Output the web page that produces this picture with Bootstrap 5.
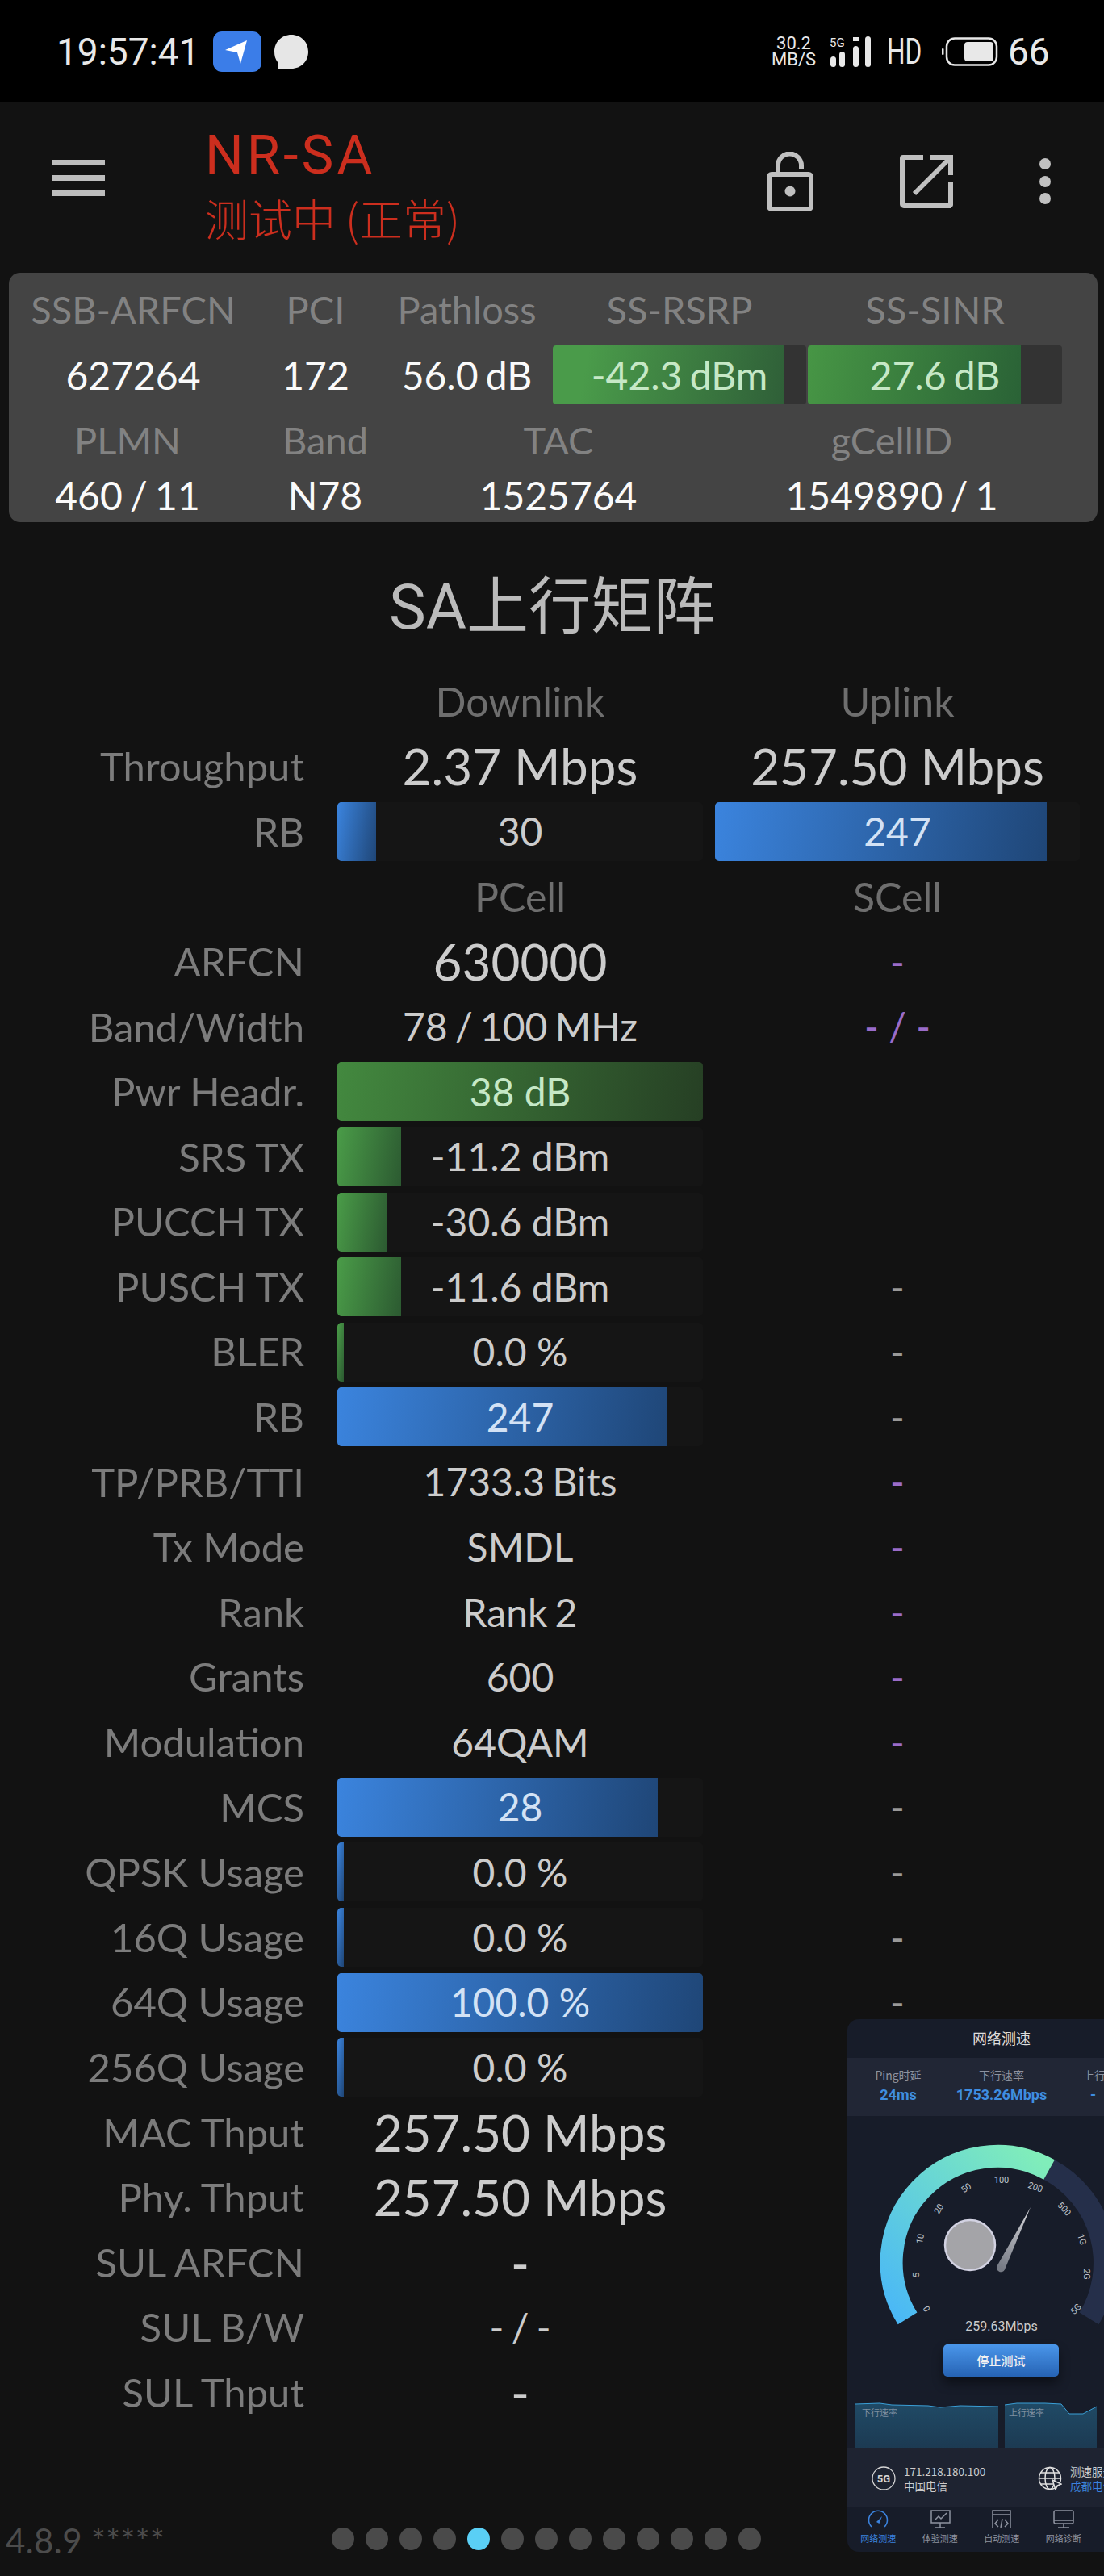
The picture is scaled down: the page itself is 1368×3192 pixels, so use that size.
<!doctype html>
<html lang="zh">
<head>
<meta charset="utf-8">
<title>NR-SA</title>
<link href="https://cdn.jsdelivr.net/npm/bootstrap@5.3.0/dist/css/bootstrap.min.css" rel="stylesheet">
<style>
html,body{background:#121212}
body{width:1368px;height:3192px;overflow:hidden;font-family:Lato,"Noto Sans CJK SC",sans-serif;color:#ccc}
.screen{width:1368px;height:3192px;overflow:hidden}
.sbar{height:127px;background:#000;color:#e8e8e8;font-family:Roboto,sans-serif;padding-left:70px}
.clock{font-size:46px;line-height:1;width:194px;white-space:nowrap}
.navapp{width:60px;height:50px;background:#3b7de8;border-radius:11px;flex:none}
.bubble{margin-left:15px}
.netspeed{margin-left:565px;width:71px;font-size:22px;line-height:20px;text-align:center;flex:none}
.sig{margin-left:9px}
.hdt{font-size:44px;line-height:1;width:41px;margin-left:19px;transform:scaleX(.72);transform-origin:left center;white-space:nowrap}
.batt{margin-left:27px}
.lvl{font-size:46px;line-height:1;margin-left:12px}
.appbar{height:211px;font-family:Roboto,"Noto Sans CJK SC",sans-serif;padding-left:64px}
.burger{width:66px;height:45px;margin-top:-25px}
.burger span{display:block;height:7px;margin-bottom:12px;background:#bdbdbd}
.apptitle{margin-left:125px;margin-top:2px;color:#cc2e1e;width:313px;flex:none}
.apptitle .t1{font-size:67px;line-height:68px;letter-spacing:4px;margin-left:-1px}
.apptitle .t2{font-size:54px;line-height:78px;margin-top:5px;font-family:"Noto Sans CJK SC",sans-serif;font-weight:300;white-space:nowrap;margin-left:-1px}
.aicons{margin-left:382px;margin-top:-15px}
.ishare,.idots{margin-left:107px}
.cpanel{margin-left:11px;width:1349px;height:309px;background:#444;border-radius:14px;font-size:48px;text-align:center}
.cpanel .lb{color:#828282;font-size:47px}
.cpanel .vl{color:#fafafa}
.crow{display:grid;white-space:nowrap;align-items:center;line-height:1;word-spacing:-3px}
.crow.a{grid-template-columns:290px 162px 213px 314px 2px 315px;padding-left:9px}
.crow.b{grid-template-columns:294px 196px 382px 444px}
.h90{height:90px}.h72{height:72px}.h38{height:38px}
.sbartrack{height:73px;background:#333;border-radius:4px;position:relative;--bs-progress-bg:#333;--bs-progress-border-radius:4px;--bs-progress-font-size:48px}
.gfill{background:linear-gradient(100deg,#4a9b4a 15%,#2f5f38)}
.gfill2{background:linear-gradient(100deg,#479645,#2a6236)}
.overtext{position:absolute;inset:0;display:flex;align-items:center;justify-content:center;white-space:nowrap}
.mtitle{padding-top:60px;padding-bottom:30px;line-height:92px;font-size:77px;text-align:center;color:#bbb;font-family:Roboto,"Noto Sans CJK SC",sans-serif}
.mrow{height:80.6px;display:flex;align-items:center;font-size:48px;white-space:nowrap}
.mlab{width:377px;text-align:right;color:#7c7c7c;flex:none;font-size:49px}
.mcell{width:453px;flex:none;text-align:center;margin-left:41px;color:#ccc}
.mcell2{width:452px;flex:none;text-align:center;margin-left:15px;color:#ccc}
.fhead{color:#6e6e6e;font-size:50px}
.big{font-size:62px}
.sm{font-size:48px;word-spacing:-3px}
.vio{color:#9a6cc9}
.dash{color:#999}
.mtrack{height:73px;width:100%;position:relative;--bs-progress-bg:#151515;--bs-progress-border-radius:5px;--bs-progress-font-size:48px}
.fg{background:linear-gradient(100deg,#4a9c48,#2c5a31)}
.fgw{background:linear-gradient(100deg,#43893f,#263f24)}
.fb{background:linear-gradient(100deg,#3b84de,#1f4677)}
.ong{color:#c6e8c6}
.onb{color:#d3e2f5}
.foot{padding-top:127px;padding-left:7px;height:187px}
.ver{width:404px;font-size:42px;line-height:32px;color:#4c4c4c;white-space:nowrap;letter-spacing:.4px}
.pdots{gap:14px}
.pdots i{display:block;width:28px;height:28px;border-radius:50%;background:#4a4a4a}
.pdots i.on{background:#5acff5}
.float{position:absolute;left:1050px;top:2502px;width:318px;height:660px;overflow:hidden;background:#171c29;border-radius:14px 0 0 14px;font-family:"Noto Sans CJK SC",sans-serif;color:#ccc}
.fh{height:48px;line-height:46px;text-align:center;font-size:18px;color:#ddd;padding-left:64px}
.fs{height:72px;background:#212635;text-align:center;white-space:nowrap;position:relative}
.fs .c{position:absolute;top:9px}
.fs .k{font-size:14px;line-height:24px;color:#8d929f}
.fs .v{font-size:18px;line-height:26px;font-weight:700;color:#3f8ee0;font-family:Roboto,sans-serif}
.gsvg{display:block;overflow:visible}
.speed{line-height:22px;font-size:16px;text-align:center;padding-left:64px;font-family:Roboto,sans-serif;color:#ccc}
.stopb{width:143px;height:40px;margin:11px 0 0 119px;border-radius:5px;background:linear-gradient(#4a96ea,#2663b4);color:#f1f1f1;font-size:15px;line-height:40px;text-align:center;box-shadow:0 8px 14px rgba(0,0,0,.45);font-weight:500}
.charts{margin-top:32px;padding-left:10px;gap:8px;height:57px}
.fi{height:73px;background:#1e2331;font-size:13px;line-height:18px;padding-left:30px;white-space:nowrap}
.fi svg{flex:none}
.fi .bl{color:#3b82dc}
.fitxt{width:166px;flex:none;margin-left:10px;font-size:13.5px}
.fitxt2{margin-left:10px;font-size:13.5px}
.ft{height:55px;padding-left:0}
.ft>div{width:76.5px;text-align:center;font-size:11px;line-height:14px;color:#8e93a0;flex:none}
.ft svg{display:block;margin:3px auto 4px}
.ft .act{color:#3b82dc}
</style>
</head>
<body>
<div class="screen position-relative">
  <div class="sbar d-flex align-items-center">
    <div class="clock">19:57:41</div>
    <div class="navapp d-flex align-items-center justify-content-center">
      <svg width="34" height="34" viewBox="0 0 34 34"><path d="M2 15 L29 3 L21 32 L17 18 Z" fill="#fff"/></svg>
    </div>
    <svg class="bubble" width="44" height="44" viewBox="0 0 44 44"><path d="M22 1C34 1 43 10 43 22S34 43 22 43C16 43 11 43 4 44C7 41 6 38 5 35C2 31 1 27 1 22C1 10 10 1 22 1Z" fill="#e6e6e6"/></svg>
    <div class="netspeed">30.2<br>MB/S</div>
    <svg class="sig" width="52" height="38" viewBox="0 0 52 38"><text x="0" y="13" font-size="15" font-family="Roboto" fill="#e8e8e8">5G</text><rect x="1" y="25" width="7" height="13" rx="3.5" fill="#e8e8e8"/><rect x="12" y="19" width="7" height="19" rx="3.5" fill="#e8e8e8"/><rect x="29" y="12" width="7" height="26" rx="3.5" fill="#e8e8e8"/><rect x="29" y="1" width="7" height="5" fill="#e8e8e8"/><rect x="44" y="0" width="7" height="38" rx="3.5" fill="#e8e8e8"/></svg>
    <div class="hdt">HD</div>
    <svg class="batt" width="70" height="36" viewBox="0 0 70 36"><rect x="6" y="1.5" width="62" height="33" rx="10" fill="none" stroke="#e8e8e8" stroke-width="2.5"/><rect x="28" y="6" width="36" height="24" rx="4" fill="#e8e8e8"/><rect x="0" y="14" width="2.5" height="8" rx="1" fill="#e8e8e8"/></svg>
    <div class="lvl">66</div>
  </div>

  <div class="appbar d-flex align-items-center">
    <div class="burger"><span></span><span></span><span></span></div>
    <div class="apptitle">
      <div class="t1">NR-SA</div>
      <div class="t2">测试中 (正常)</div>
    </div>
    <div class="aicons d-flex align-items-center">
      <svg width="58" height="74" viewBox="0 0 58 74"><path d="M14 30V17A14 14 0 0 1 43 17V22" fill="none" stroke="#c0c0c0" stroke-width="6"/><rect x="3" y="28" width="52" height="43" rx="3" fill="none" stroke="#c0c0c0" stroke-width="6"/><circle cx="29" cy="49" r="6.5" fill="#c0c0c0"/></svg>
      <svg class="ishare" width="66" height="66" viewBox="0 0 66 66"><path d="M29 3H4a1 1 0 0 0-1 1V61a2 2 0 0 0 2 2H62a2 2 0 0 0 1-2V33" fill="none" stroke="#c0c0c0" stroke-width="6"/><path d="M38 3H63V25M62 4 18 48" fill="none" stroke="#c0c0c0" stroke-width="6"/></svg>
      <svg class="idots" width="14" height="58" viewBox="0 0 14 58"><circle cx="7" cy="7" r="7" fill="#c0c0c0"/><circle cx="7" cy="29" r="7" fill="#c0c0c0"/><circle cx="7" cy="50" r="7" fill="#c0c0c0"/></svg>
    </div>
  </div>

  <div class="cpanel">
    <div class="crow a h90 lb"><div>SSB-ARFCN</div><div>PCI</div><div>Pathloss</div><div>SS-RSRP</div><div></div><div>SS-SINR</div></div>
    <div class="crow a h72 vl">
      <div>627264</div><div>172</div><div>56.0 dB</div>
      <div class="progress sbartrack"><div class="progress-bar gfill" style="width:91.4%"></div><span class="overtext ong">-42.3 dBm</span></div>
      <div></div>
      <div class="progress sbartrack"><div class="progress-bar gfill2" style="width:83.8%"></div><span class="overtext ong">27.6 dB</span></div>
    </div>
    <div class="crow b h90 lb"><div>PLMN</div><div>Band</div><div>TAC</div><div>gCellID</div></div>
    <div class="crow b h38 vl"><div>460 / 11</div><div>N78</div><div>1525764</div><div>1549890 / 1</div></div>
  </div>

  <div class="mtitle">SA上行矩阵</div>

  <div class="mrow"><div class="mlab"></div><div class="mcell fhead">Downlink</div><div class="mcell2 fhead">Uplink</div></div>
  <div class="mrow"><div class="mlab">Throughput</div><div class="mcell big">2.37 Mbps</div><div class="mcell2 big">257.50 Mbps</div></div>
  <div class="mrow"><div class="mlab">RB</div>
    <div class="mcell"><div class="progress mtrack"><div class="progress-bar fb" style="width:10.6%"></div><span class="overtext">30</span></div></div>
    <div class="mcell2"><div class="progress mtrack"><div class="progress-bar fb" style="width:91%"></div><span class="overtext onb">247</span></div></div>
  </div>
  <div class="mrow"><div class="mlab"></div><div class="mcell fhead">PCell</div><div class="mcell2 fhead">SCell</div></div>
  <div class="mrow"><div class="mlab">ARFCN</div><div class="mcell big">630000</div><div class="mcell2 vio">-</div></div>
  <div class="mrow"><div class="mlab">Band/Width</div><div class="mcell sm">78 / 100 MHz</div><div class="mcell2 vio">- / -</div></div>
  <div class="mrow"><div class="mlab">Pwr Headr.</div><div class="mcell"><div class="progress mtrack"><div class="progress-bar fgw" style="width:100%"></div><span class="overtext ong">38 dB</span></div></div></div>
  <div class="mrow"><div class="mlab">SRS TX</div><div class="mcell"><div class="progress mtrack"><div class="progress-bar fg" style="width:17.5%"></div><span class="overtext">-11.2 dBm</span></div></div></div>
  <div class="mrow"><div class="mlab">PUCCH TX</div><div class="mcell"><div class="progress mtrack"><div class="progress-bar fg" style="width:13.5%"></div><span class="overtext">-30.6 dBm</span></div></div></div>
  <div class="mrow"><div class="mlab">PUSCH TX</div><div class="mcell"><div class="progress mtrack"><div class="progress-bar fg" style="width:17.5%"></div><span class="overtext">-11.6 dBm</span></div></div><div class="mcell2 dash">-</div></div>
  <div class="mrow"><div class="mlab">BLER</div><div class="mcell"><div class="progress mtrack"><div class="progress-bar fg" style="width:1.8%"></div><span class="overtext">0.0 %</span></div></div><div class="mcell2 dash">-</div></div>
  <div class="mrow"><div class="mlab">RB</div><div class="mcell"><div class="progress mtrack"><div class="progress-bar fb" style="width:90.3%"></div><span class="overtext onb">247</span></div></div><div class="mcell2 dash">-</div></div>
  <div class="mrow"><div class="mlab">TP/PRB/TTI</div><div class="mcell sm">1733.3 Bits</div><div class="mcell2 vio">-</div></div>
  <div class="mrow"><div class="mlab">Tx Mode</div><div class="mcell sm">SMDL</div><div class="mcell2 vio">-</div></div>
  <div class="mrow"><div class="mlab">Rank</div><div class="mcell sm">Rank 2</div><div class="mcell2 vio">-</div></div>
  <div class="mrow"><div class="mlab">Grants</div><div class="mcell sm">600</div><div class="mcell2 vio">-</div></div>
  <div class="mrow"><div class="mlab">Modulation</div><div class="mcell sm">64QAM</div><div class="mcell2 vio">-</div></div>
  <div class="mrow"><div class="mlab">MCS</div><div class="mcell"><div class="progress mtrack"><div class="progress-bar fb" style="width:87.6%"></div><span class="overtext onb">28</span></div></div><div class="mcell2 dash">-</div></div>
  <div class="mrow"><div class="mlab">QPSK Usage</div><div class="mcell"><div class="progress mtrack"><div class="progress-bar fb" style="width:1.8%"></div><span class="overtext">0.0 %</span></div></div><div class="mcell2 dash">-</div></div>
  <div class="mrow"><div class="mlab">16Q Usage</div><div class="mcell"><div class="progress mtrack"><div class="progress-bar fb" style="width:1.8%"></div><span class="overtext">0.0 %</span></div></div><div class="mcell2 dash">-</div></div>
  <div class="mrow"><div class="mlab">64Q Usage</div><div class="mcell"><div class="progress mtrack"><div class="progress-bar fb" style="width:100%"></div><span class="overtext onb">100.0 %</span></div></div><div class="mcell2 dash">-</div></div>
  <div class="mrow"><div class="mlab">256Q Usage</div><div class="mcell"><div class="progress mtrack"><div class="progress-bar fb" style="width:1.8%"></div><span class="overtext">0.0 %</span></div></div></div>
  <div class="mrow"><div class="mlab">MAC Thput</div><div class="mcell big">257.50 Mbps</div></div>
  <div class="mrow"><div class="mlab">Phy. Thput</div><div class="mcell big">257.50 Mbps</div></div>
  <div class="mrow"><div class="mlab">SUL ARFCN</div><div class="mcell big">-</div></div>
  <div class="mrow"><div class="mlab">SUL B/W</div><div class="mcell sm">- / -</div></div>
  <div class="mrow"><div class="mlab">SUL Thput</div><div class="mcell big">-</div></div>

  <div class="foot d-flex">
    <div class="ver">4.8.9 *****</div>
    <div class="pdots d-flex"><i></i><i></i><i></i><i></i><i class="on"></i><i></i><i></i><i></i><i></i><i></i><i></i><i></i><i></i></div>
  </div>

  <div class="float">
    <div class="fh">网络测速</div>
    <div class="fs">
      <div class="c" style="left:28px;width:70px"><div class="k">Ping时延</div><div class="v">24ms</div></div>
      <div class="c" style="left:121px;width:140px"><div class="k">下行速率</div><div class="v">1753.26Mbps</div></div>
      <div class="c" style="left:292px;width:70px;text-align:left"><div class="k">上行速率</div><div class="v">&nbsp;&nbsp;-</div></div>
    </div>
    <svg class="gsvg" width="318" height="250" viewBox="0 0 318 250">
      <defs>
        <linearGradient id="ga" gradientUnits="userSpaceOnUse" x1="60" y1="250" x2="250" y2="66"><stop offset="0" stop-color="#4ab8f6"/><stop offset="1" stop-color="#80edba"/></linearGradient>
        <linearGradient id="gn" gradientUnits="userSpaceOnUse" x1="190" y1="188" x2="227" y2="113"><stop offset="0" stop-color="#777b85"/><stop offset="1" stop-color="#d8d8dc"/></linearGradient>
      </defs>
      <path d="M250.1 66.5A131.5 131.5 0 0 1 299.5 250.9" fill="none" stroke="#252f4a" stroke-width="28"/>
      <path d="M74.5 250.9A131.5 131.5 0 0 1 250.1 66.5" fill="none" stroke="url(#ga)" stroke-width="28"/>
      <circle cx="152" cy="160" r="31" fill="#a4a4a8" stroke="#d2d2e2" stroke-width="2.5"/>
      <path d="M185.5 185.8 227 113 195 190.2A5 5 0 0 1 185.5 185.8Z" fill="url(#gn)"/>
      <g font-family="Roboto,sans-serif" font-size="11" fill="#bfc2c8" text-anchor="middle">
        <text x="85" y="201" transform="rotate(-90 85 197)">5</text>
        <text x="90" y="156" transform="rotate(-80 90 152)">10</text>
        <text x="113" y="119" transform="rotate(-60 113 115)">20</text>
        <text x="147" y="93" transform="rotate(-35 147 89)">50</text>
        <text x="191" y="83">100</text>
        <text x="233" y="92" transform="rotate(20 233 88)">200</text>
        <text x="269" y="119" transform="rotate(48 269 115)">500</text>
        <text x="291" y="157" transform="rotate(72 291 153)">1G</text>
        <text x="297" y="200" transform="rotate(90 297 196)">2G</text>
        <text x="98" y="243" transform="rotate(-120 98 239)">0</text>
        <text x="283" y="243" transform="rotate(-45 283 239)">5G</text>
      </g>
    </svg>
    <div class="speed">259.63Mbps</div>
    <div class="stopb">停止测试</div>
    <div class="charts d-flex">
      <svg width="177" height="57" viewBox="0 0 177 57"><defs><linearGradient id="ch" x1="0" y1="0" x2="0" y2="1"><stop offset="0" stop-color="#204a66"/><stop offset="1" stop-color="#1c3a52"/></linearGradient></defs><path d="M0 2L30 1L45 3L90 4L105 6L130 4L177 5V57H0Z" fill="url(#ch)"/><path d="M0 2L30 1L45 3L90 4L105 6L130 4L177 5" fill="none" stroke="#3aa0d8" stroke-width="1"/><text x="8" y="17" font-size="11" font-family="Noto Sans CJK SC" fill="#7f8fa0">下行速率</text></svg>
      <svg width="114" height="57" viewBox="0 0 114 57"><path d="M0 3L15 1L50 1L70 2L80 14L97 14L114 5V57H0Z" fill="url(#ch)"/><path d="M0 3L15 1L50 1L70 2L80 14L97 14L114 5" fill="none" stroke="#3aa0d8" stroke-width="1"/><text x="5" y="17" font-size="11" font-family="Noto Sans CJK SC" fill="#7f8fa0">上行速率</text></svg>
    </div>
    <div class="fi d-flex align-items-center">
      <svg width="30" height="30" viewBox="0 0 30 30"><circle cx="15" cy="15" r="14" fill="none" stroke="#d5d5d5" stroke-width="1.3"/><text x="15" y="20" font-size="13" font-weight="700" font-family="Roboto" text-anchor="middle" fill="#d5d5d5">5G</text></svg>
      <div class="fitxt"><div>171.218.180.100</div><div>中国电信</div></div>
      <svg width="30" height="30" viewBox="0 0 30 30"><g fill="none" stroke="#e0e0e0" stroke-width="1.5"><circle cx="15" cy="15" r="13.5"/><ellipse cx="15" cy="15" rx="6" ry="13.5"/><path d="M2 15H28M4 8H26M4 22H26"/></g><path d="M18 17 29 22 24 24 22 29Z" fill="#1e2331" stroke="#e0e0e0" stroke-width="1.5"/></svg>
      <div class="fitxt2"><div>测速服务器</div><div class="bl">成都电信</div></div>
    </div>
    <div class="ft d-flex">
      <div class="act"><svg width="26" height="24" viewBox="0 0 26 24"><path d="M5 21A11.5 11.5 0 1 1 21 21" fill="none" stroke="#3b82dc" stroke-width="1.6"/><path d="M11 15 18 8 14.5 17Z" fill="#3b82dc"/></svg>网络测速</div>
      <div><svg width="26" height="24" viewBox="0 0 26 24"><g fill="none" stroke="#8e93a0" stroke-width="1.5"><path d="M2 1H25V16H2ZM13 16V22M7 22H19"/><path d="M6 13 11 8 14 11 21 4"/></g></svg>体验测速</div>
      <div><svg width="26" height="24" viewBox="0 0 26 24"><g fill="none" stroke="#8e93a0" stroke-width="1.5"><path d="M2 22V1H24V22M2 6H24"/><path d="M9 12 5 17 9 21M17 12 21 17 17 21M14 11 12 22"/></g></svg>自动测速</div>
      <div><svg width="26" height="24" viewBox="0 0 26 24"><g fill="none" stroke="#8e93a0" stroke-width="1.5"><rect x="1" y="1" width="24" height="16" rx="2"/><path d="M1 13H25M13 17V22M6 22H20"/></g></svg>网络诊断</div>
    </div>
  </div>
</div>
<script src="https://cdn.jsdelivr.net/npm/bootstrap@5.3.0/dist/js/bootstrap.bundle.min.js"></script>
</body>
</html>
